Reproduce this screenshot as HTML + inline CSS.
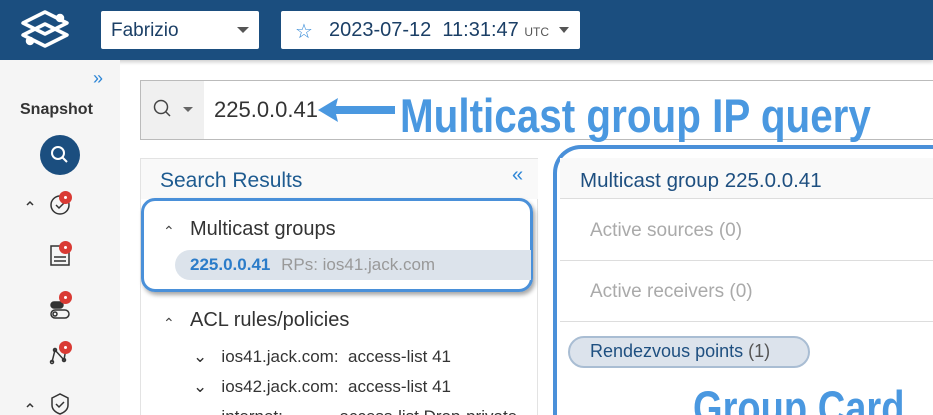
<!DOCTYPE html><html><head><style>
html,body{margin:0;width:933px;height:415px;overflow:hidden}
body{font-family:"Liberation Sans",sans-serif;background:#fff;position:relative}
.a{position:absolute}
.hdr{left:0;top:0;width:933px;height:60px;background:#1b4e7f;box-shadow:0 2px 4px rgba(0,0,0,.2)}
.sel{background:#fff;border-radius:2px;height:38px;top:11px}
.side{left:0;top:60px;width:120px;height:355px;background:#f5f5f5}
.ann{color:#4a98e0;font-weight:bold;transform-origin:left top;transform:scaleX(.86);white-space:nowrap}
.dot{width:13px;height:13px;border-radius:50%;background:#d93a33}
.dot:after{content:"";position:absolute;left:5px;top:5px;width:3px;height:3px;border-radius:50%;background:#fff}
</style></head><body>
<div class="a hdr"></div>
<svg class="a" style="left:18px;top:8px" width="54" height="44" viewBox="0 0 54 44" fill="none" stroke="#fff" stroke-width="3.5" stroke-linejoin="round"><path d="M5 15 L27 4 L49 15 L27 26 Z"/><path d="M5 27 L27 16 L49 27 L27 38 Z"/><circle cx="42" cy="10" r="2.5" fill="#fff"/><circle cx="12" cy="33" r="2.5" fill="#fff"/></svg>
<div class="a sel" style="left:101px;width:158px"><span class="a" style="left:10px;top:9px;font-size:19px;color:#1b3f66">Fabrizio</span><span class="a" style="left:136px;top:16px;border:6px solid transparent;border-top:6px solid #555;border-bottom:0"></span></div>
<div class="a sel" style="left:281px;width:299px"><span class="a" style="left:14px;top:8px;font-size:20px;color:#2e86d6">☆</span><span class="a" style="left:48px;top:8px;font-size:20px;color:#1b3f66">2023-07-12&nbsp; 11:31:47 <span style="font-size:12px;color:#555">UTC</span></span><span class="a" style="left:278px;top:16px;border:5px solid transparent;border-top:6px solid #555;border-bottom:0"></span></div>
<div class="a side"></div>
<div class="a" style="left:93px;top:68px;color:#2e86d6;font-size:18px">»</div>
<div class="a" style="left:20px;top:101px;font-size:16px;font-weight:bold;color:#333">Snapshot</div>
<div class="a" style="left:40px;top:135px;width:40px;height:40px;border-radius:50%;background:#1b4e7f"></div>
<svg class="a" style="left:48px;top:143px" width="24" height="24" fill="none" stroke="#fff" stroke-width="2"><circle cx="10" cy="10" r="6"/><path d="M14.5 14.5 L19 19"/></svg>
<svg class="a" style="left:22px;top:190px" width="60" height="225" fill="none" stroke="#333" stroke-width="1.5"><path d="M5 15 L8 12 L11 15"/><circle cx="38" cy="15" r="9"/><path d="M34 15 l3 3 l5 -5"/><rect x="29" y="56" width="18" height="19"/><path d="M32 67 h12 M32 71 h12"/><rect x="29" y="112" width="12" height="6" rx="3" fill="#333"/><rect x="29" y="120" width="18" height="8" rx="4"/><circle cx="33" cy="124" r="2"/><path d="M30 172 L33 160 L42 170 L44 158"/><circle cx="30" cy="172" r="1.5"/><circle cx="33" cy="160" r="1.5"/><circle cx="42" cy="170" r="1.5"/><path d="M5 217 L8 214 L11 217"/><path d="M30 208 L38 204 L46 208 V215 Q46 221 38 224 Q30 221 30 215 Z"/><path d="M34 214 l3 3 l5 -5"/></svg>
<div class="a dot" style="left:59px;top:191px"></div><div class="a dot" style="left:59px;top:241px"></div><div class="a dot" style="left:59px;top:291px"></div><div class="a dot" style="left:59px;top:341px"></div>
<div class="a" style="left:140px;top:80px;width:793px;height:58px;border:1px solid #bbb;border-right:0"></div>
<div class="a" style="left:141px;top:81px;width:63px;height:58px;background:#f0f0f0"></div>
<svg class="a" style="left:152px;top:98px" width="24" height="24" fill="none" stroke="#444" stroke-width="1.5"><circle cx="9" cy="9" r="6.5"/><path d="M13.5 13.5 L18 18"/></svg>
<span class="a" style="left:183px;top:107px;border:5px solid transparent;border-top:5px solid #666;border-bottom:0"></span>
<div class="a" style="left:214px;top:97px;font-size:22px;color:#333">225.0.0.41</div>
<svg class="a" style="left:315px;top:92px" width="85" height="40"><path d="M3 18 L23 6 L21 14 L80 14 L80 22 L21 22 L23 30 Z" fill="#4a98e0"/></svg>
<div class="a ann" style="left:400px;top:88px;font-size:47px">Multicast group IP query</div>
<div class="a" style="left:140px;top:158px;width:398px;height:257px;border:1px solid #e3e3e3;border-bottom:0;background:#fff;box-sizing:border-box"></div>
<div class="a" style="left:141px;top:159px;width:397px;height:40px;background:#f9f9f9"></div>
<div class="a" style="left:160px;top:169px;font-size:21px;color:#1e5b90">Search Results</div>
<div class="a" style="left:512px;top:164px;font-size:20px;color:#2e86d6">«</div>
<div class="a" style="left:141px;top:198px;width:392px;height:94px;border:3px solid #4a90d9;border-radius:14px;box-sizing:border-box;box-shadow:2px 3px 4px rgba(0,0,0,.35)"></div>
<div class="a" style="left:163px;top:223px;font-size:14px;color:#444">⌃</div>
<div class="a" style="left:190px;top:218px;font-size:20px;color:#333">Multicast groups</div>
<div class="a" style="left:175px;top:250px;width:356px;height:30px;background:#dce3eb;border-radius:15px 0 0 15px"></div>
<div class="a" style="left:190px;top:255px;font-size:17px;color:#2b7cc9;font-weight:bold">225.0.0.41 <span style="font-weight:normal;color:#999;margin-left:6px">RPs: ios41.jack.com</span></div>
<div class="a" style="left:163px;top:315px;font-size:14px;color:#444">⌃</div>
<div class="a" style="left:190px;top:309px;font-size:20px;color:#333">ACL rules/policies</div>
<div class="a" style="left:193px;top:342px;width:340px;height:73px;overflow:hidden;font-size:17px;color:#333;line-height:30px;white-space:nowrap">⌄&nbsp;&nbsp; ios41.jack.com:&nbsp; access-list 41<br>⌄&nbsp;&nbsp; ios42.jack.com:&nbsp; access-list 41<br>⌄&nbsp;&nbsp; internet:&nbsp;&nbsp;&nbsp;&nbsp;&nbsp;&nbsp;&nbsp;&nbsp;&nbsp;&nbsp;&nbsp; access-list Drop-private</div>
<div class="a" style="left:553px;top:145px;width:380px;height:270px;border:4px solid #4a90d9;border-right:0;border-bottom:0;border-radius:28px 0 0 0;box-sizing:border-box"></div>
<div class="a" style="left:560px;top:158px;width:373px;height:40px;background:#f9f9f9;border-bottom:1px solid #ddd"></div>
<div class="a" style="left:580px;top:169px;font-size:20.5px;color:#1e4f80">Multicast group 225.0.0.41</div>
<div class="a" style="left:590px;top:220px;font-size:19px;color:#aaa">Active sources (0)</div>
<div class="a" style="left:560px;top:260px;width:373px;height:1px;background:#ddd"></div>
<div class="a" style="left:590px;top:281px;font-size:19px;color:#aaa">Active receivers (0)</div>
<div class="a" style="left:560px;top:321px;width:373px;height:1px;background:#ddd"></div>
<div class="a" style="left:568px;top:336px;width:242px;height:32px;border:2px solid #a9bdd3;background:#dce3ec;border-radius:16px;box-sizing:border-box"></div>
<div class="a" style="left:590px;top:341px;font-size:18px;color:#1e4f80">Rendezvous points <span style="color:#555">(1)</span></div>
<div class="a" style="left:690px;top:378px;width:243px;height:37px;overflow:hidden"><div class="a ann" style="left:3px;top:2px;font-size:47px;transform:scaleX(.81)">Group Card</div></div>
</body></html>
